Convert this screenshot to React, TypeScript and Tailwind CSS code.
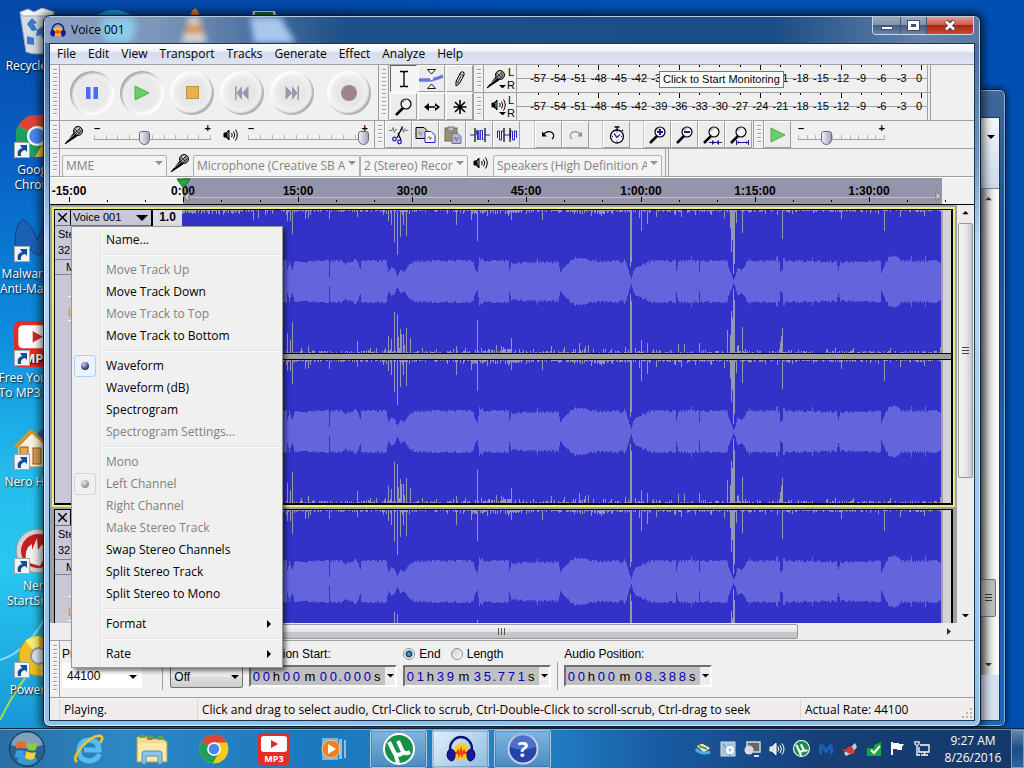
import { useState } from 'react'
import type { ReactNode } from 'react'
import clsx from 'clsx'

const WAVE_W = 759
const WAVE_H = 143
const WAVE_X = 182

// [x, length] of the clipped peaks, measured from the top / bottom edge
const TOP_PEAKS = [
  [219, 5], [253, 10], [258, 8], [287, 11], [290, 11], [292, 24], [305, 9], [308, 8], [329, 9], [357, 7], [388, 11], [391, 15],
  [394, 32], [397, 45], [400, 27], [403, 15], [406, 26], [456, 15], [471, 10], [477, 31], [511, 10], [542, 10],
  [630, 57], [631, 52], [639, 8], [641, 21], [647, 14], [656, 7], [681, 7], [724, 8], [730, 18], [731, 42],
  [732, 30], [733, 64], [734, 54], [736, 13], [742, 23], [782, 29], [841, 9], [884, 21], [900, 7], [924, 6],
]
const BOTTOM_PEAKS = [
  [287, 20], [290, 13], [292, 31], [308, 7], [357, 12], [376, 5], [388, 17], [391, 14], [394, 41], [397, 39], [398, 16],
  [400, 24], [401, 19], [403, 19], [404, 8], [406, 25], [410, 15], [422, 5], [456, 7], [477, 33], [496, 8], [511, 15],
  [551, 7], [564, 6], [579, 10], [585, 7], [588, 8], [625, 6], [630, 59], [631, 52], [641, 13], [647, 10], [678, 9],
  [684, 9], [699, 10], [727, 23], [730, 18], [731, 42], [732, 35], [733, 64], [734, 53], [737, 7], [738, 8], [742, 26],
  [780, 11], [781, 17], [782, 25], [835, 5], [940, 6],
]
// half height of the RMS band along the track
const RMS = [
  [182, 19], [286, 19], [287, 11], [289, 18], [292, 11], [294, 18], [328, 19], [329, 4], [330, 19], [342, 19], [345, 16], [356, 21],
  [358, 16], [360, 12], [361, 19], [386, 19], [388, 9], [391, 14], [394, 12], [397, 5], [400, 11], [404, 9], [407, 14], [413, 18],
  [420, 19], [472, 19], [475, 11], [477, 8], [479, 22], [482, 19], [508, 19], [509, 10], [511, 17], [558, 18], [560, 9], [563, 13], [575, 22],
  [590, 19], [626, 18], [629, 7], [631, 2], [633, 10], [636, 14], [645, 16], [652, 19], [675, 19], [676, 10], [678, 19], [698, 19], [699, 9],
  [700, 19], [726, 19], [729, 12], [732, 4], [733, 1], [735, 5], [737, 13], [741, 11], [748, 19], [779, 19], [780, 9],
  [782, 11], [783, 22], [786, 19], [836, 18], [838, 11], [840, 18], [880, 19], [881, 8], [883, 13], [885, 16], [889, 23], [895, 24], [901, 19], [935, 19], [940, 16],
]

function createRandom(seed: number) {
  let s = seed
  return () => {
    s = (s * 1664525 + 1013904223) % 4294967296
    return s / 4294967296
  }
}

function rmsAt(x: number) {
  const i = RMS.findIndex(([px]) => px >= x)
  if (i <= 0) return RMS[i === 0 ? 0 : RMS.length - 1][1]
  const [x0, y0] = RMS[i - 1]
  const [x1, y1] = RMS[i]
  return y0 + ((y1 - y0) * (x - x0)) / (x1 - x0)
}

function buildWave() {
  const rnd = createRandom(17)
  let peaks = ''
  let rms = ''
  for (let i = 0; i < WAVE_W; i++) {
    const x = i + WAVE_X
    const busy = (x > 470 && x < 530) || (x > 572 && x < 615) || x < 240
    let top = rnd() < (busy ? 0.8 : 0.5) ? 1 + Math.floor(rnd() * (busy ? 4 : 2)) : 0
    if (rnd() < 0.05) top += 3
    let bottom = rnd() < 0.45 ? 1 + Math.floor(rnd() * (busy ? 4 : 2)) : 0
    if (rnd() < 0.05) bottom += 3
    const tp = TOP_PEAKS.find(([px]) => px === x)
    const bp = BOTTOM_PEAKS.find(([px]) => px === x)
    if (tp) top = tp[1]
    if (bp) bottom = bp[1]
    if (top) peaks += `M${i} 0h1v${top}h-1z`
    if (bottom) peaks += `M${i} ${WAVE_H}h1v-${bottom}h-1z`
    const base = rmsAt(x)
    const half = Math.round(base + (base > 15 ? rnd() * 2.5 + (rnd() < 0.02 ? 4 : 0) : 0))
    rms += `M${i} ${71 - half}h1v${half * 2 + 1}h-1z`
  }
  return { peaks, rms }
}

const WAVE = buildWave()

function Waveform() {
  return (
    <svg
      viewBox={`0 0 ${WAVE_W} ${WAVE_H}`}
      preserveAspectRatio="none"
      shapeRendering="crispEdges"
      className="block h-[143px] w-full bg-[#3232c8]"
    >
      <path d={WAVE.rms} fill="#6464dc" />
      <path d={WAVE.peaks} fill="#9696af" />
    </svg>
  )
}

/* ---------- small glyphs ---------- */

function MicIcon() {
  return (
    <svg width="20" height="20" viewBox="0 0 20 20">
      <path d="M1 19 10 8l3 3z" fill="#000" stroke="#000" />
      <path d="M4 15l7-6" stroke="#aaa" />
      <circle cx="14" cy="6" r="4.5" fill="#999" stroke="#000" />
      <path d="M11 4l5 5M13 2l4 5M10 6l4 4M11 8l5-5M13 10l4-4" stroke="#222" strokeWidth="0.7" />
      <path d="M12 4h2M13 3h2" stroke="#eee" />
    </svg>
  )
}

function SpeakerIcon() {
  return (
    <svg width="15" height="14" viewBox="0 0 15 14" fill="none" stroke="#000">
      <path d="M1 5h2L6 2v10L3 9H1z" fill="#000" />
      <path d="M4 5.500l1-1v5" stroke="#aaa" />
      <path d="M8.500 5q1.500 2 0 4M10.500 3.500q2.500 3.500 0 7M12.500 1.500q3.500 5.500 0 11" />
    </svg>
  )
}

function Lens({ children }: { children?: ReactNode }) {
  return (
    <svg width="22" height="22" viewBox="0 0 22 22" fill="none">
      <path d="M3 19l7-7" stroke="#000" strokeWidth="2.500" />
      <circle cx="13" cy="8" r="5" fill="#f4f4f4" stroke="#000" strokeWidth="1.200" />
      <path d="M10 7q1-2.500 3-2.500" stroke="#999" />
      {children}
    </svg>
  )
}

function Arrow({ className, size = 8 }: { className?: string; size?: number }) {
  return (
    <svg width={size} height={size / 2} viewBox="0 0 8 4" className={className}>
      <path d="M0 0h8L4 4z" fill="currentColor" />
    </svg>
  )
}

function Grabber() {
  return (
    <div className="flex w-[10px] shrink-0 justify-center border-r border-[#a0a0a0] py-1">
      <div className="w-[4px] bg-[repeating-linear-gradient(180deg,#a0a0a0_0_1px,#ffffff_1px_2px,#f0f0f0_2px_4px)]" />
    </div>
  )
}

function RoundButton({ label, pressed, children }: { label: string; pressed?: boolean; children: ReactNode }) {
  return (
    <button
      aria-label={label}
      className={clsx(
        'flex size-[44px] shrink-0 items-center justify-center rounded-full',
        pressed
          ? 'bg-[radial-gradient(circle,#e9e9e9_45%,#f0f0f0_65%)] shadow-[inset_2px_2px_2px_#a8a8a8,inset_-2px_-2px_3px_#ffffff]'
          : 'bg-[radial-gradient(circle,#e7e7e7_40%,#f2f2f2_62%)] shadow-[inset_-2px_-2px_2px_#acacac,inset_2px_2px_3px_#ffffff]',
      )}
    >
      {children}
    </button>
  )
}

function ToolButton({ label, active, children }: { label: string; active?: boolean; children: ReactNode }) {
  return (
    <button
      aria-label={label}
      className={clsx(
        'flex h-[27px] w-[27px] shrink-0 items-center justify-center border',
        active
          ? 'border-t-[#606060] border-l-[#606060] border-r-white border-b-white bg-[#f4f4f4]'
          : 'border-t-white border-l-white border-r-[#a0a0a0] border-b-[#a0a0a0] bg-[#ececec]',
      )}
    >
      {children}
    </button>
  )
}

function MixerSlider({ label, value, className }: { label: string; value: number; className: string }) {
  return (
    <div className={clsx('relative h-[27px] shrink-0', className)}>
      <div className="flex justify-between px-px font-['Liberation_Sans',sans-serif] text-[11px] leading-[14px] font-bold">
        <span>–</span>
        <span>+</span>
      </div>
      <div className="mx-px flex h-[5px] justify-between border-b border-[#a0a0a0]">
        {Array.from({ length: 11 }, (_, i) => (
          <i key={i} className="h-full w-px bg-[#b8b8b8]" />
        ))}
      </div>
      <input
        type="range"
        aria-label={label}
        defaultValue={value}
        className="absolute inset-x-0 top-[9px] h-[15px] w-full appearance-none bg-transparent [&::-webkit-slider-thumb]:h-[14px] [&::-webkit-slider-thumb]:w-[11px] [&::-webkit-slider-thumb]:appearance-none [&::-webkit-slider-thumb]:rounded-t-[3px] [&::-webkit-slider-thumb]:rounded-b-[6px] [&::-webkit-slider-thumb]:border [&::-webkit-slider-thumb]:border-[#686874] [&::-webkit-slider-thumb]:bg-[linear-gradient(90deg,#f0f0fa,#a4a4c0)]"
      />
    </div>
  )
}

function DeviceSelect({ label, value, className }: { label: string; value: string; className: string }) {
  return (
    <div className={clsx('relative h-[22px] shrink-0', className)}>
      <select
        aria-label={label}
        className="h-full w-full appearance-none overflow-hidden rounded-[2px] border border-[#adb2b5] bg-[#f4f4f4] pr-[14px] pl-[3px] text-[12px] text-[#838383]"
      >
        <option>{value}</option>
      </select>
      <Arrow className="pointer-events-none absolute top-[9px] right-[4px] text-[#909090]" />
    </div>
  )
}

const DB_MARKS = Array.from({ length: 20 }, (_, i) => 57 - i * 3)

function Meter({ label, tooltip, children }: { label: string; tooltip?: string; children: ReactNode }) {
  return (
    <div className="flex h-[27px]">
      <Grabber />
      <button aria-label={label} className="flex w-[32px] shrink-0 items-center">
        <span className="flex w-[22px] flex-col items-end">{children}</span>
        <span className="flex flex-col pl-px font-['Liberation_Sans',sans-serif] text-[11px] leading-[13px]">
          <span>L</span>
          <span>R</span>
        </span>
      </button>
      <div className="relative w-[411px] border-l border-[#a0a0a0]">
        <div className="absolute inset-x-0 top-[13px] h-px bg-[#a0a0a0]" />
        <div className="relative flex h-full w-[415px] pl-[11px]">
          {DB_MARKS.map((db) => (
            <div key={db} className="flex flex-1 flex-col items-center">
              <i className={clsx('w-px bg-black', db % 12 ? 'h-[2px]' : 'h-[5px]')} />
              <span
                className={clsx(
                  "font-['Liberation_Sans',sans-serif] text-[11px] leading-[16px] whitespace-nowrap",
                  db % 12 ? 'pt-[3px]' : '',
                  db === 0 && 'pr-[6px]',
                )}
              >
                {db ? `-${db}` : '0'}
              </span>
            </div>
          ))}
        </div>
        {tooltip && (
          <div
            role="tooltip"
            className="absolute top-[6px] left-[142px] z-10 border border-[#767676] bg-white px-[3px] font-['Liberation_Sans',sans-serif] text-[11px] leading-[15px] whitespace-nowrap"
          >
            {tooltip}
          </div>
        )}
      </div>
      <div className="w-[4px] border-x border-[#a0a0a0]" />
    </div>
  )
}

/* ---------- toolbars ---------- */

function TransportRow() {
  return (
    <div className="flex h-[56px] border-b border-[#a0a0a0]">
      <Grabber />
      <div className="flex w-[319px] shrink-0 items-center gap-[6px] border-r border-[#a0a0a0] pl-[10px]">
        <RoundButton label="Pause" pressed>
          <svg width="14" height="14" viewBox="0 0 14 14" fill="#4a6cf0">
            <path d="M1 1h4.500v12H1zM8.500 1H13v12H8.500z" />
          </svg>
        </RoundButton>
        <RoundButton label="Play" pressed>
          <svg width="16" height="16" viewBox="0 0 16 16">
            <path d="M1 1l14 7-14 7z" fill="#66cf66" stroke="#58a858" />
          </svg>
        </RoundButton>
        <RoundButton label="Stop">
          <span className="size-[13px] border border-[#c09040] bg-[#eab04a]" />
        </RoundButton>
        <RoundButton label="Skip to Start">
          <svg width="14" height="14" viewBox="0 0 14 14" fill="#9e94ac">
            <path d="M0 0h1.500v14H0zM7 0v14L1.500 7zM13.500 0v14L7 7z" />
          </svg>
        </RoundButton>
        <RoundButton label="Skip to End">
          <svg width="14" height="14" viewBox="0 0 14 14" fill="#9e94ac">
            <path d="M12.500 0H14v14h-1.500zM7 0v14l5.500-7zM.5 0v14L7 7z" />
          </svg>
        </RoundButton>
        <div className="pl-[7px]">
          <RoundButton label="Record">
            <span className="size-[16px] rounded-full bg-[#9c8688]" />
          </RoundButton>
        </div>
      </div>
      <Grabber />
      <div className="grid grid-cols-3 gap-px border-r border-[#a0a0a0] pl-px">
        <ToolButton label="Selection Tool" active>
          <svg width="12" height="18" viewBox="0 0 12 18" stroke="#000" fill="none">
            <path d="M2 1.500h3l1 1 1-1h3M2 16.500h3l1-1 1 1h3M6 2v14" strokeWidth="1.300" />
          </svg>
        </ToolButton>
        <ToolButton label="Envelope Tool">
          <svg width="25" height="22" viewBox="0 0 25 22" fill="none">
            <path d="M0 12h9q6 0 15-4" stroke="#6a76e0" strokeWidth="3.500" />
            <path d="M8.500 1.500h8l-4 4.500zM8.500 20.500h8l-4-4.500z" stroke="#000" strokeWidth="0.900" fill="#fff" />
            <circle cx="12.500" cy="10.500" r="1.500" fill="#fff" />
          </svg>
        </ToolButton>
        <ToolButton label="Draw Tool">
          <svg width="12" height="18" viewBox="0 0 12 18" stroke="#000" fill="#ddd">
            <path d="M2 16v-4.500L6.500 2.500Q8 1 10 2.500v2.500L5.500 13.500z" />
            <path d="M2 11.500l3.500 2M6 4l4 2M7 6l-3 6" strokeWidth="0.800" />
          </svg>
        </ToolButton>
        <ToolButton label="Zoom Tool">
          <Lens />
        </ToolButton>
        <ToolButton label="Time Shift Tool">
          <svg width="18" height="10" viewBox="0 0 18 10">
            <path d="M1 5l5-4v8zM17 5l-5-4v8zM4 4.200h10v1.600H4z" />
          </svg>
        </ToolButton>
        <ToolButton label="Multi-Tool Mode">
          <svg width="14" height="14" viewBox="0 0 14 14" stroke="#000" strokeWidth="1.600">
            <path d="M7 0v14M2 2l10 10M12 2L2 12M0.500 7h13" />
          </svg>
        </ToolButton>
      </div>
      <div className="flex flex-col gap-px bg-[linear-gradient(180deg,transparent_27px,#a0a0a0_27px_28px,transparent_28px)]">
        <Meter label="Recording meter" tooltip="Click to Start Monitoring">
          <MicIcon />
          <Arrow size={7} className="-mt-1" />
        </Meter>
        <Meter label="Playback meter">
          <SpeakerIcon />
          <Arrow size={7} />
        </Meter>
      </div>
    </div>
  )
}

function EditRow() {
  return (
    <div className="flex h-[28px] border-b border-[#a0a0a0]">
      <Grabber />
      <div className="flex w-[315px] shrink-0 items-center border-r border-[#a0a0a0] pl-[4px]">
        <MicIcon />
        <MixerSlider label="Recording volume" value={43} className="ml-[9px] w-[119px]" />
        <div className="ml-[11px]">
          <SpeakerIcon />
        </div>
        <MixerSlider label="Playback volume" value={100} className="ml-[9px] w-[122px]" />
      </div>
      <Grabber />
      <div className="flex">
        <ToolButton label="Cut">
          <svg width="20" height="20" viewBox="0 0 20 20" fill="none">
            <path d="M0 5.500h3l1-3 1.500 5 1-3h1.500M12 5.500l1-3 1.500 5 1-4 1 2h3" stroke="#777" />
            <path d="M13.500 1.500L8 13M9 8l3 7" stroke="#000" strokeWidth="1.200" />
            <circle cx="5.500" cy="14" r="1.800" stroke="#2020c8" strokeWidth="1.300" />
            <circle cx="10.500" cy="17" r="1.800" stroke="#2020c8" strokeWidth="1.300" />
          </svg>
        </ToolButton>
        <ToolButton label="Copy">
          <svg width="21" height="18" viewBox="0 0 21 18">
            <path d="M1 1.500h8l3 3v8H1z" fill="#ccc" stroke="#000" />
            <path d="M10 5.500h6l4 4v7H10z" fill="#fff" stroke="#2020c8" />
            <path d="M3 7l1.500-1.500 1 4 1.500-3M12 12h1l1-2 1 4 1-3 1 2" stroke="#777" strokeWidth="0.800" fill="none" />
          </svg>
        </ToolButton>
        <ToolButton label="Paste">
          <svg width="18" height="18" viewBox="0 0 18 18">
            <rect x="1" y="2" width="12" height="13" fill="#98946c" stroke="#66665a" />
            <path d="M4 1h6v4H4z" fill="#bbb" stroke="#777" />
            <path d="M8 7.500h6l3 3v7H8z" fill="#b4b8cc" stroke="#6a6ea8" />
            <path d="M9.500 13h1l1-2 1 4 1-3h2" stroke="#667" strokeWidth="0.800" fill="none" />
          </svg>
        </ToolButton>
        <ToolButton label="Trim">
          <svg width="20" height="16" viewBox="0 0 20 16" fill="none" stroke="#2424c8">
            <path d="M0 8h5M15 8h5M7.500 3v10M10 3v10M12.500 3v10" />
            <path d="M6.500 8V3.500h2V12.500h2V3.500h2V12.500h1" strokeWidth="0.800" />
            <path d="M5 1v14M15 1v14" stroke="#000" strokeWidth="1.200" />
          </svg>
        </ToolButton>
        <ToolButton label="Silence">
          <svg width="20" height="16" viewBox="0 0 20 16" fill="none" stroke="#2424c8">
            <path d="M0.500 11V4h2v9h2V4h2M13.500 11V4h2v9h2V4h2v7M7 8h6" />
            <path d="M7 1v14M13 1v14" stroke="#000" strokeWidth="1.200" />
          </svg>
        </ToolButton>
        <div className="ml-[14px] flex border-l border-[#c8c8c8]">
          <ToolButton label="Undo">
            <svg width="15" height="10" viewBox="0 0 15 10" fill="none" stroke="#000" strokeWidth="1.200">
              <path d="M2 5q4-5 9-2.500 3.500 3 0 6.500" />
              <path d="M1 1.500v5h5z" fill="#000" stroke="none" />
            </svg>
          </ToolButton>
          <ToolButton label="Redo">
            <svg width="15" height="10" viewBox="0 0 15 10" fill="none" stroke="#909090" strokeWidth="1.200">
              <path d="M13 5q-4-5-9-2.500-3.500 3 0 6.500" />
              <path d="M14 1.500v5H9z" fill="#909090" stroke="none" />
            </svg>
          </ToolButton>
        </div>
        <div className="ml-[13px] flex border-l border-[#c8c8c8]">
          <ToolButton label="Sync-Lock Tracks">
            <svg width="16" height="18" viewBox="0 0 16 18" fill="none" stroke="#000" strokeWidth="1.300">
              <circle cx="8" cy="10.500" r="6.500" fill="#fff" />
              <path d="M8 1v3M5.500 1h5M13 4l1 1" />
              <path d="M8 11.500L5 7.500M8 11.500l3-3" stroke="#2424a8" />
              <path d="M8 5.500v1M8 14.500v1M3 10.500h1M12 10.500h1" stroke="#2424a8" />
            </svg>
          </ToolButton>
        </div>
        <div className="ml-[13px] flex border-l border-[#c8c8c8]">
          <ToolButton label="Zoom In">
            <Lens>
              <path d="M10 8h6M13 5v6" stroke="#1a1aa0" strokeWidth="2" />
            </Lens>
          </ToolButton>
          <ToolButton label="Zoom Out">
            <Lens>
              <path d="M10 8h6" stroke="#1a1aa0" strokeWidth="2" />
            </Lens>
          </ToolButton>
          <ToolButton label="Fit Selection">
            <Lens>
              <path d="M8 18.500h13" stroke="#1a1aa0" />
              <path d="M11 16v5l3-2.500zM18 16v5l-3-2.500z" fill="#1a1aa0" />
            </Lens>
          </ToolButton>
          <ToolButton label="Fit Project">
            <Lens>
              <path d="M8.500 16v5M20.500 16v5M9 18.500h11" stroke="#1a1aa0" />
              <path d="M9 18.500l2-1.500v3zM20 18.500l-2-1.500v3z" fill="#1a1aa0" />
            </Lens>
          </ToolButton>
        </div>
      </div>
      <div className="ml-px flex border-l border-[#a0a0a0]">
        <Grabber />
        <ToolButton label="Play at Speed">
          <svg width="16" height="16" viewBox="0 0 16 16">
            <path d="M1 1l14 7-14 7z" fill="#66cf66" stroke="#58a858" />
          </svg>
        </ToolButton>
        <MixerSlider label="Playback speed" value={31} className="ml-[6px] w-[89px]" />
      </div>
    </div>
  )
}

function DeviceRow() {
  return (
    <div className="flex h-[28px] border-b border-[#a0a0a0]">
      <Grabber />
      <div className="flex items-center border-r border-[#a0a0a0] pr-[3px] pl-[2px]">
        <DeviceSelect label="Audio Host" value="MME" className="w-[105px]" />
        <div className="mx-[3px]">
          <MicIcon />
        </div>
        <DeviceSelect label="Recording Device" value="Microphone (Creative SB Audigy)" className="w-[167px]" />
        <DeviceSelect label="Recording Channels" value="2 (Stereo) Recording Channels" className="w-[108px]" />
        <div className="mx-[5px]">
          <SpeakerIcon />
        </div>
        <DeviceSelect label="Playback Device" value="Speakers (High Definition Audio)" className="w-[169px]" />
      </div>
      <div className="ml-[2px] border-l border-[#a0a0a0]" />
    </div>
  )
}

const HOURS = ['-15:00', '0:00', '15:00', '30:00', '45:00', '1:00:00', '1:15:00', '1:30:00']

function Ruler() {
  return (
    <div className="relative h-[28px] shrink-0 overflow-hidden border-t border-b border-t-white border-b-black bg-[#f0f0f0]">
      <div className="absolute inset-y-0 right-[32px] left-[133px] bg-[#9494aa]">
        <div className="absolute inset-x-0 bottom-[6px] h-px bg-[#c0c0c8]" />
      </div>
      {Array.from({ length: 24 }, (_, i) => (
        <i
          key={i}
          className={clsx('absolute bottom-[2px] w-px bg-black', i % 3 ? 'h-[2px]' : 'h-[5px]')}
          style={{ left: Math.round(19 + i * 38.1) }}
        />
      ))}
      {HOURS.map((text, i) => (
        <span
          key={text}
          className="absolute top-[6px] -translate-x-1/2 font-['Liberation_Sans',sans-serif] text-[12px] leading-[14px] font-bold"
          style={{ left: Math.round(19 + i * 114.3) }}
        >
          {text}
        </span>
      ))}
      <svg className="absolute top-0 left-[127px]" width="14" height="26" viewBox="0 0 14 26">
        <path d="M0 1h13L6.500 10z" fill="#24a83c" stroke="#106820" />
        <path d="M12 14v10l-5-5z" fill="#c8c8c8" stroke="#777" />
      </svg>
      <svg className="absolute right-[32px] bottom-[2px]" width="7" height="12" viewBox="0 0 7 12">
        <path d="M1 1v10l5-5z" fill="#c8c8c8" stroke="#777" />
      </svg>
    </div>
  )
}

function Track({ name, selected, onMenu }: { name: string; selected?: boolean; onMenu: () => void }) {
  return (
    <article className={clsx('mx-[2px] border-2', selected ? 'border-[#ecec78]' : 'border-[#a0a0a0]')}>
      <div className="flex border border-r-2 border-b-2 border-black">
        <section className="w-[96px] shrink-0 bg-[#c8c8d8] font-['Liberation_Sans',sans-serif] text-[11px] leading-[16px]">
          <div className="flex h-[16px] border-b border-[#707078]">
            <button aria-label="Close track" className="flex w-[16px] items-center justify-center border-r border-black">
              <svg width="9" height="9" viewBox="0 0 9 9" stroke="#000" strokeWidth="1.500">
                <path d="M0 0l9 9M9 0L0 9" />
              </svg>
            </button>
            <button onClick={onMenu} className="flex flex-1 items-center justify-between pr-[3px] pl-[2px] leading-[15px]">
              {name}
              <Arrow size={12} />
            </button>
          </div>
          <p className="pl-[3px]">Stereo</p>
          <p className="pl-[3px]">32-bit</p>
          <button className="mt-px h-[16px] w-full border-y border-[#808088] pl-[11px] text-left leading-[14px]">Mute</button>
          <div className="px-[13px] pt-[6px]">
            <input type="range" aria-label="Gain" className="block h-[16px] w-full appearance-none border-b border-white" />
            <div className="pt-[7px] text-[#e08a20]">L</div>
            <div className="h-px bg-white" />
          </div>
        </section>
        <div className="flex w-[31px] shrink-0 flex-col border-l-2 border-black bg-[#dcdce6] pt-px text-center font-['Liberation_Sans',sans-serif] text-[12px] leading-[13px] font-bold">
          1.0
        </div>
        <div className="min-w-0 flex-1">
          <div className="flex">
            <div className="min-w-0 flex-1">
              <Waveform />
            </div>
            <div className="w-[10px] border-l-2 border-[#a0a0a0] bg-[#d4d4d4]" />
          </div>
          <div className="h-[7px] border-y border-black bg-[#a0a0a0]" />
          <div className="flex">
            <div className="min-w-0 flex-1">
              <Waveform />
            </div>
            <div className="w-[10px] border-l-2 border-[#a0a0a0] bg-[#d4d4d4]" />
          </div>
        </div>
      </div>
    </article>
  )
}

const MENU_GROUPS = [
  [{ text: 'Name...' }],
  [
    { text: 'Move Track Up', disabled: true },
    { text: 'Move Track Down' },
    { text: 'Move Track to Top', disabled: true },
    { text: 'Move Track to Bottom' },
  ],
  [
    { text: 'Waveform', checked: true },
    { text: 'Waveform (dB)' },
    { text: 'Spectrogram' },
    { text: 'Spectrogram Settings...', disabled: true },
  ],
  [
    { text: 'Mono', disabled: true },
    { text: 'Left Channel', disabled: true, checked: true },
    { text: 'Right Channel', disabled: true },
    { text: 'Make Stereo Track', disabled: true },
    { text: 'Swap Stereo Channels' },
    { text: 'Split Stereo Track' },
    { text: 'Split Stereo to Mono' },
  ],
  [{ text: 'Format', submenu: true }],
  [{ text: 'Rate', submenu: true }],
] as { text: string; disabled?: boolean; checked?: boolean; submenu?: boolean }[][]

function TrackMenu() {
  return (
    <div
      role="menu"
      className="absolute top-[182px] left-[21px] z-20 w-[212px] border border-[#979797] bg-[#f0f0f0] bg-[linear-gradient(90deg,transparent_28px,#e2e3e3_28px_29px,#ffffff_29px_30px,transparent_30px)] py-[2px] shadow-[3px_3px_4px_rgba(0,0,0,0.5)]"
    >
      {MENU_GROUPS.map((group, g) => (
        <div key={group[0].text}>
          {g > 0 && (
            <div className="ml-[29px] flex h-[8px] items-center pr-[2px]">
              <div className="h-[2px] w-full border-t border-b border-t-[#e0e0e0] border-b-white" />
            </div>
          )}
          {group.map((item) => (
            <button
              key={item.text}
              role="menuitem"
              disabled={item.disabled}
              className={clsx(
                'flex h-[22px] w-full items-center text-left text-[12px]',
                item.disabled ? 'text-[#808080]' : 'text-black',
              )}
            >
              <span className="flex w-[34px] shrink-0 pl-[2px]">
                {item.checked && (
                  <span
                    className={clsx(
                      'flex size-[22px] items-center justify-center rounded-[3px] border',
                      item.disabled ? 'border-[#d4d4d4] bg-[#f0f0f0]' : 'border-[#aecff7] bg-[#eaf2fb]',
                    )}
                  >
                    <i
                      className={clsx(
                        'size-[8px] rounded-full',
                        item.disabled
                          ? 'bg-[radial-gradient(circle_at_35%_30%,#e8e8e8,#909090_70%)]'
                          : 'bg-[radial-gradient(circle_at_35%_30%,#c8c8f0,#2c2c70_70%)]',
                      )}
                    />
                  </span>
                )}
              </span>
              {item.text}
              {item.submenu && (
                <svg width="4" height="8" viewBox="0 0 4 8" className="mr-[11px] ml-auto">
                  <path d="M0 0l4 4-4 4z" />
                </svg>
              )}
            </button>
          ))}
        </div>
      ))}
    </div>
  )
}

function TimeField({ label, value }: { label: string; value: string }) {
  return (
    <div
      role="group"
      aria-label={label}
      className="flex h-[22px] w-[148px] border-2 border-t-[#707070] border-r-white border-b-white border-l-[#707070] bg-[#c0c0c0] font-['Liberation_Sans',sans-serif] text-[13px] leading-[19px]"
    >
      <div className="flex flex-1">
        {value.split('').map((ch, i) => (
          <span
            key={i}
            className={clsx(
              'text-center',
              ch === 'm' ? 'w-[17px]' : ch === '.' ? 'w-[4px]' : 'w-[10px]',
              /[\d.]/.test(ch) && 'text-[#0000b4]',
            )}
          >
            {ch}
          </span>
        ))}
      </div>
      <button aria-label={`${label} format`} className="flex w-[10px] items-center justify-center bg-[#ececec]">
        <Arrow size={7} />
      </button>
    </div>
  )
}

function SelectionBar() {
  return (
    <div className="flex h-[57px] shrink-0 border-t border-[#a0a0a0] bg-[#f0f0f0] font-['Liberation_Sans',sans-serif] text-[12px]">
      <Grabber />
      <div className="flex flex-col pt-[4px] pl-[2px]">
        <label htmlFor="rate" className="h-[18px] leading-[18px] whitespace-nowrap">Project Rate (Hz):</label>
        <div className="relative w-[80px]">
          <select id="rate" className="h-[25px] w-full appearance-none bg-white pl-[5px]">
            <option>44100</option>
          </select>
          <Arrow className="pointer-events-none absolute top-[12px] right-[5px]" />
        </div>
      </div>
      <div className="mt-[21px] mb-[7px] ml-[5px] border-l border-[#a0a0a0]" />
      <div className="flex flex-col gap-[3px] pt-[4px] pl-[7px]">
        <label htmlFor="snap" className="h-[18px] leading-[18px]">Snap To:</label>
        <div className="relative w-[73px]">
          <select id="snap" className="h-[22px] w-full appearance-none rounded-[2px] border border-[#707070] bg-[linear-gradient(180deg,#f2f2f2,#ebebeb_50%,#dddddd_50%,#cfcfcf)] pl-[3px]">
            <option>Off</option>
          </select>
          <Arrow className="pointer-events-none absolute top-[9px] right-[4px]" />
        </div>
      </div>
      <div className="flex flex-col gap-[2px] pt-[4px] pl-[6px]">
        <span className="h-[18px] leading-[18px]">Selection Start:</span>
        <TimeField label="Selection Start" value="00h00m00.000s" />
      </div>
      <div className="flex flex-col gap-[2px] pt-[4px] pl-[6px]">
        <div className="flex h-[18px] items-center gap-[4px]">
          <input
            id="end"
            type="radio"
            name="range"
            defaultChecked
            className="size-[12px] appearance-none rounded-full border border-[#8e8f8f] bg-[#f4f4f4] checked:bg-[radial-gradient(circle,#3aa0d8_0_1px,#14405c_3px,#f4f4f4_4px)]"
          />
          <label htmlFor="end">End</label>
          <input
            id="length"
            type="radio"
            name="range"
            className="ml-[6px] size-[12px] appearance-none rounded-full border border-[#8e8f8f] bg-[linear-gradient(135deg,#c8ccd0,#ffffff)] checked:bg-[radial-gradient(circle,#3aa0d8_0_1px,#14405c_3px,#f4f4f4_4px)]"
          />
          <label htmlFor="length">Length</label>
        </div>
        <TimeField label="Selection End" value="01h39m35.771s" />
      </div>
      <div className="mt-[21px] mb-[7px] ml-[6px] border-l border-[#a0a0a0]" />
      <div className="flex flex-col gap-[2px] pt-[4px] pl-[6px]">
        <span className="h-[18px] leading-[18px]">Audio Position:</span>
        <TimeField label="Audio Position" value="00h00m08.388s" />
      </div>
    </div>
  )
}

const MENUS = ['File', 'Edit', 'View', 'Transport', 'Tracks', 'Generate', 'Effect', 'Analyze', 'Help']

function AudacityLogo({ size }: { size: number }) {
  return (
    <svg width={size} height={size} viewBox="0 0 30 30">
      <path d="M8 24v-9l2-4 1 1 2-3 1 2 1-3 2 3 1-2 2 3 1-1 1 4v9l-2 2H10z" fill="#fcc81c" />
      <path d="M8 19h3l1-2 1 4 2-5 1 5 2-4 1 2h4" stroke="#f04010" strokeWidth="2" fill="none" />
      <path d="M4 18v-3a11 12 0 0 1 22 0v3" fill="none" stroke="#10107c" strokeWidth="2.400" />
      <path d="M4 15q5 0 5 6t-4 6q-4-2-4-6t3-6zM26 15q-5 0-5 6t4 6q4-2 4-6t-3-6z" fill="#1818a0" stroke="#08084c" />
    </svg>
  )
}

function AudacityWindow() {
  const [menuOpen, setMenuOpen] = useState(true)

  return (
    <main className="absolute top-[15px] right-[43px] bottom-px left-[43px] flex flex-col rounded-[7px] border border-[#0c1c30] bg-[linear-gradient(180deg,#3c6a9c_0%,#6c94c0_20%,#b4d6f8_32%,#8cc0e8_100%)] px-[5px] pb-[5px] shadow-[0_0_9px_3px_rgba(0,0,0,0.6),inset_0_0_0_1px_rgba(255,255,255,0.65)]">
      <header className="relative -mx-[4px] mt-px flex h-[26px] shrink-0 items-center gap-[5px] overflow-hidden rounded-t-[6px] bg-[linear-gradient(90deg,#8ba0c2_0%,#7c96ba_12%,#1f5088_32%,#1b4c84_78%,#6482aa_94%,#587aa6_100%)] pl-[5px]">
        <svg className="absolute inset-y-0 left-[35px] h-full blur-[3px]" width="220" height="26" viewBox="0 0 220 26">
          <circle cx="38" cy="11" r="18" fill="#8cc8e8" />
          <path d="M109 0h10l8 26h-26z" fill="#d8d8d8" />
          <path d="M107 8h14l3 8h-20z" fill="#d88c50" />
          <path d="M170 0h30l16 26h-42z" fill="#a8c8ee" />
        </svg>
        <div className="relative">
          <AudacityLogo size={16} />
        </div>
        <h1 className="relative text-[12px] leading-[16px] text-black">Voice 001</h1>
        <div className="absolute top-0 right-[5px] flex h-[18px] overflow-hidden rounded-b-[4px] border border-t-0 border-[#c8d8e8]">
          <button aria-label="Minimize" className="flex w-[28px] items-end justify-center border-r border-[#405878] bg-[linear-gradient(180deg,#98a8bc,#8494ac_45%,#425c80_50%,#6884a8)] pb-[4px]">
            <i className="h-[4px] w-[12px] border border-[#40506c] bg-white" />
          </button>
          <button aria-label="Maximize" className="flex w-[26px] items-center justify-center border-r border-[#405878] bg-[linear-gradient(180deg,#98a8bc,#8494ac_45%,#425c80_50%,#6884a8)]">
            <i className="h-[9px] w-[11px] border-[3px] border-white bg-[#40506c] outline outline-[#40506c]" />
          </button>
          <button aria-label="Close" className="flex w-[46px] items-center justify-center bg-[linear-gradient(180deg,#dc9c90,#c86050_45%,#a82814_50%,#c84c34)]">
            <svg width="12" height="11" viewBox="0 0 12 11">
              <path d="M2 1l8 9M10 1L2 10" stroke="#503030" strokeWidth="4.500" />
              <path d="M2 1.500l8 8M10 1.500l-8 8" stroke="#fff" strokeWidth="2.800" />
            </svg>
          </button>
        </div>
      </header>

      <div className="relative flex min-h-0 flex-1 flex-col border border-[#1c3450] bg-[#f0f0f0]">
        <nav className="flex h-[20px] shrink-0 items-center bg-[linear-gradient(180deg,#ffffff,#f0f3fa_35%,#d6dcec_45%,#dfe5f4)] pl-px text-[12px]">
          {MENUS.map((name) => (
            <button key={name} className="px-[6px] leading-[20px]">
              {name}
            </button>
          ))}
        </nav>

        <div className="shrink-0 overflow-hidden border-t border-[#a0a0a0]">
          <TransportRow />
          <EditRow />
          <DeviceRow />
        </div>

        <Ruler />

        <div className="flex min-h-0 flex-1">
          <div className="min-w-0 flex-1 overflow-hidden bg-[#a0a0a0] pt-[2px]">
            <Track name="Voice 001" selected onMenu={() => setMenuOpen(!menuOpen)} />
            <Track name="Voice 001" onMenu={() => setMenuOpen(!menuOpen)} />
          </div>
          <div className="flex w-[17px] shrink-0 flex-col items-center bg-[#ededed] py-[6px]">
            <Arrow className="shrink-0 rotate-180" size={7} />
            <div className="mt-[8px] flex h-[255px] w-[15px] flex-col items-center justify-center gap-[2px] rounded-[2px] border border-[#989898] bg-[linear-gradient(90deg,#f4f4f4,#e8e8ec_50%,#c4c4cc)]">
              <i className="h-px w-[7px] bg-[#444]" />
              <i className="h-px w-[7px] bg-[#444]" />
              <i className="h-px w-[7px] bg-[#444]" />
            </div>
            <Arrow className="mt-auto shrink-0" size={7} />
          </div>
        </div>

        <div className="flex h-[17px] shrink-0 items-center bg-[#ededed] pr-[23px] pl-[155px]">
          <div className="flex h-[15px] w-[593px] items-center justify-center gap-[2px] rounded-[2px] border border-[#989898] bg-[linear-gradient(180deg,#f4f4f4,#e4e4e6_50%,#c8c8cc_55%,#c4c4c8)]">
            <i className="h-[7px] w-px bg-[#555]" />
            <i className="h-[7px] w-px bg-[#555]" />
            <i className="h-[7px] w-px bg-[#555]" />
          </div>
          <svg width="4" height="7" viewBox="0 0 4 7" className="ml-auto">
            <path d="M0 0l4 3.500L0 7z" fill="#333" />
          </svg>
        </div>

        <SelectionBar />

        <footer className="flex h-[23px] shrink-0 items-center border-t border-[#a0a0a0] bg-[#f0edec] pt-[2px] text-[12px] whitespace-nowrap">
          <span className="ml-[9px] w-[138px] border-l border-[#d8d8d8] pl-[4px] leading-[20px]">Playing.</span>
          <span className="min-w-0 flex-1 border-l border-[#d8d8d8] pl-[4px] leading-[20px]">
            Click and drag to select audio, Ctrl-Click to scrub, Ctrl-Double-Click to scroll-scrub, Ctrl-drag to seek
          </span>
          <span className="w-[161px] border-l border-[#d8d8d8] pl-[4px] leading-[20px]">Actual Rate: 44100</span>
          <svg width="13" height="13" viewBox="0 0 13 13" fill="#b8b8b8" className="self-end">
            <path d="M9 1h2v2H9zM9 5h2v2H9zM5 5h2v2H5zM9 9h2v2H9zM5 9h2v2H5zM1 9h2v2H1z" />
          </svg>
        </footer>

        {menuOpen && <TrackMenu />}
      </div>
    </main>
  )
}

function BackWindow() {
  return (
    <div className="absolute top-[89px] right-[18px] bottom-px left-[500px] flex flex-col rounded-[6px] border border-[#0c1c30] bg-[linear-gradient(180deg,#40699c,#1c5498_20%,#1868bc)] pt-[27px] pr-[5px] pb-[5px] shadow-[0_0_6px_1px_rgba(0,0,0,0.5),inset_0_0_0_1px_rgba(200,225,255,0.6)]">
      <div className="flex flex-1 flex-col border border-[#203a58]">
        <div className="flex h-[71px] items-start justify-end border-b border-[#808080] bg-[linear-gradient(180deg,#f4f7fc,#ccd8ea)] pt-[17px] pr-[4px]">
          <Arrow size={8} />
        </div>
        <div className="flex flex-1 flex-col items-end bg-[linear-gradient(270deg,#fafafa_0_3px,#d8d8d8_10px,#808080_20px)] pt-[8px] pr-[7px]">
          <Arrow className="rotate-180 text-[#333]" size={7} />
          <div className="mt-auto -mr-[4px] flex h-[38px] w-[16px] flex-col items-center justify-center gap-[2px] rounded-[2px] border border-[#707070] bg-[#bcbcbc]">
            <i className="h-px w-[7px] bg-[#333]" />
            <i className="h-px w-[7px] bg-[#333]" />
            <i className="h-px w-[7px] bg-[#333]" />
          </div>
          <Arrow className="mt-[46px] mb-[9px] text-[#333]" size={7} />
        </div>
        <div className="h-[45px] bg-[#d4e0f0]" />
      </div>
    </div>
  )
}

/* ---------- desktop ---------- */

function ChromeLogo({ size }: { size: number }) {
  return (
    <svg width={size} height={size} viewBox="0 0 48 48">
      <circle cx="24" cy="24" r="23" fill="#f8c820" />
      <path d="M24 24L4 12.500A23 23 0 0 1 44.500 13.500H24z" fill="#dc4437" />
      <path d="M24 24L4 12.500A23 23 0 0 0 22 47l10-18z" fill="#1ea05c" />
      <circle cx="24" cy="24" r="11" fill="#fff" />
      <circle cx="24" cy="24" r="8.500" fill="#4a88ee" />
    </svg>
  )
}

function Mp3Logo({ size }: { size: number }) {
  return (
    <svg width={size} height={size} viewBox="0 0 32 32">
      <rect width="32" height="32" rx="4" fill="#e42c28" />
      <rect x="3" y="3" width="26" height="16" rx="3" fill="#fff" />
      <path d="M13 7l7 4-7 4z" fill="#d82828" />
      <text x="16" y="29" textAnchor="middle" fontFamily="Open Sans, sans-serif" fontSize="9" fontWeight="700" fill="#fff">MP3</text>
    </svg>
  )
}

function Shortcut() {
  return (
    <svg className="absolute bottom-[2px] left-0" width="16" height="16" viewBox="0 0 16 16">
      <rect x="0.500" y="0.500" width="15" height="15" fill="#f0f4f8" stroke="#a0a8b0" />
      <path d="M4 14q-2-6 4-8L6 3h7v7l-2-2q-5 1-4 6z" fill="#184c94" />
    </svg>
  )
}

const DESKTOP_ICONS = [
  {
    label: ['Recycle Bin'],
    art: (
      <svg width="44" height="48" viewBox="0 0 44 48">
        <path d="M5 4h34l-5 40q-12 4-23 0z" fill="#d4dce4" stroke="#98a4b0" />
        <path d="M5 4l8-3 6 3 8-4 12 4-2 4H7z" fill="#f4f6f8" stroke="#a0a8b0" />
        <path d="M12 16l5-6 5 5-3 1 3 6-5 1zM28 18l5 7-5 6-2-4-5 1 1-6zM12 28l7 2v7l-7-1z" fill="#3c78cc" />
      </svg>
    ),
  },
  { label: ['Google', 'Chrome'], shortcut: true, art: <ChromeLogo size={44} /> },
  {
    label: ['Malwareby…', 'Anti-Malware'],
    shortcut: true,
    art: (
      <svg width="48" height="46" viewBox="0 0 48 46">
        <path d="M4 38Q-4 14 9 1q10 6 15 22Q30 8 39 2q10 14 5 34l-8 6V20l-8 18q-6 2-10-4-4-6-8-4v10z" fill="#1c60b4" stroke="#103c84" />
      </svg>
    ),
  },
  { label: ['Free YouTube', 'To MP3 Con...'], shortcut: true, art: <Mp3Logo size={46} /> },
  {
    label: ['Nero Home'],
    shortcut: true,
    art: (
      <svg width="46" height="46" viewBox="0 0 46 46">
        <circle cx="34" cy="16" r="13" fill="#3c5ca8" />
        <path d="M4 22L18 8l14 12v22H4z" fill="#f8f0dc" stroke="#b09060" />
        <path d="M1 22L17 6l17 15" fill="none" stroke="#d89820" strokeWidth="3" />
        <rect x="6" y="22" width="8" height="9" fill="#e0a850" stroke="#8c5c20" />
        <rect x="19" y="23" width="8" height="16" fill="#d8a050" stroke="#8c5c20" />
      </svg>
    ),
  },
  {
    label: ['Nero', 'StartSmart'],
    shortcut: true,
    art: (
      <svg width="46" height="48" viewBox="0 0 46 48">
        <circle cx="24" cy="23" r="22" fill="#d4d4d8" stroke="#909098" />
        <circle cx="24" cy="23" r="17" fill="#c82020" />
        <path d="M12 34q-2-14 6-18l0 6 5-12 1 12 4-6q6 10-2 22z" fill="#f4f0f0" />
      </svg>
    ),
  },
  {
    label: ['PowerISO'],
    shortcut: true,
    art: (
      <svg width="44" height="46" viewBox="0 0 44 46">
        <circle cx="24" cy="23" r="20" fill="#f0c020" stroke="#b08c10" />
        <path d="M24 23L10 8q6-5 14-5zM24 23l16 12q-6 7-14 8z" fill="#fce878" />
        <circle cx="24" cy="23" r="8" fill="#e0e8f0" stroke="#909898" strokeWidth="2" />
      </svg>
    ),
  },
]

const TASKBAR_BUTTON =
  'flex h-[38px] w-[57px] items-center justify-center rounded-[2px] border border-[#a8c8e4] shadow-[inset_0_0_0_1px_rgba(20,60,110,0.25)]'

function Taskbar() {
  return (
    <nav className="flex h-[40px] shrink-0 items-center border-t border-[#10283c] bg-[linear-gradient(90deg,#2a6ea4_0%,#2c88c4_12%,#1c78bc_30%,#2484c8_52%,#185ca4_64%,#173f78_80%,#143868_100%)] shadow-[inset_0_1px_0_rgba(190,220,245,0.5)]">
      <button aria-label="Start" className="ml-[8px] shrink-0">
        <svg width="38" height="38" viewBox="0 0 38 38">
          <circle cx="19" cy="19" r="17.500" fill="#2a628e" stroke="#123450" />
          <path d="M3 15a16.500 16.500 0 0 1 32 0q-16 6-32 0z" fill="#a4bccc" opacity="0.700" />
          <ellipse cx="19" cy="30" rx="10" ry="5" fill="#38b4e4" opacity="0.700" />
          <path d="M9 12q5-2 9 0l-1 7q-4-2-9 0z" fill="#f06830" />
          <path d="M20 12q4 3 9 1l-1 7q-5 2-9-1z" fill="#90c840" />
          <path d="M8 21q4-2 9 0l-1 7q-4-2-9 0z" fill="#3c9ce4" />
          <path d="M18 21q5 3 10 1l-2 7q-5 2-9-1z" fill="#fcd030" />
        </svg>
      </button>
      <div className="ml-[27px] flex w-[275px] shrink-0 items-center justify-between">
        <button aria-label="Internet Explorer">
          <svg width="32" height="32" viewBox="0 0 32 32" fill="none">
            <path d="M26.500 21q-3 7-10.500 7-10-1-10-10.500Q7 7 16.500 7 26 8 26 17H11" stroke="#58bcec" strokeWidth="5" />
            <path d="M4 29q-5-3 4-14Q20 1 28 3q3 2-1 7" stroke="#f4c430" strokeWidth="2.500" />
          </svg>
        </button>
        <button aria-label="Windows Explorer">
          <svg width="34" height="32" viewBox="0 0 34 32">
            <path d="M2 4h10l2 2h14l4 3v20H2z" fill="#f0dc90" stroke="#b89c50" />
            <path d="M5 2h5v3H5zM12 3h6v3h-6zM23 3h5v4h-5z" fill="#58a848" />
            <path d="M12 5h5v2h-5z" fill="#d86040" />
            <path d="M3 10h28v18H3z" fill="#fae8a8" />
            <path d="M7 31V21q0-3 3-3h14q3 0 3 3v10h-4v-8H11v8z" fill="#88c4e8" stroke="#5090b8" />
          </svg>
        </button>
        <button aria-label="Google Chrome">
          <ChromeLogo size={30} />
        </button>
        <button aria-label="Free YouTube To MP3">
          <Mp3Logo size={32} />
        </button>
        <button aria-label="Windows Media Player">
          <svg width="28" height="26" viewBox="0 0 28 26">
            <path d="M2 2h16v22H2z" fill="#7cb4dc" />
            <path d="M19 3h3v20h-3zM24 4h2v18h-2z" fill="#8cc0e4" />
            <circle cx="11" cy="13" r="9" fill="#f08020" stroke="#fcc890" />
            <path d="M8 8l8 5-8 5z" fill="#fff" />
          </svg>
        </button>
      </div>
      <div className="ml-[22px] flex shrink-0 gap-[5px]">
        <button aria-label="uTorrent" className={clsx(TASKBAR_BUTTON, 'bg-[linear-gradient(180deg,#80b4dc,#4c8cc0)]')}>
          <UTorrent size={32} />
        </button>
        <button aria-label="Audacity" className={clsx(TASKBAR_BUTTON, 'bg-[linear-gradient(135deg,#e4f0f8,#8cbce0)]')}>
          <AudacityLogo size={30} />
        </button>
        <button aria-label="Help" className={clsx(TASKBAR_BUTTON, 'bg-[linear-gradient(180deg,#80b4dc,#4c8cc0)]')}>
          <svg width="32" height="32" viewBox="0 0 32 32">
            <circle cx="16" cy="16" r="14.500" fill="#2444a8" stroke="#c8d4ec" strokeWidth="2" />
            <path d="M3 14a13 13 0 0 1 26 0q-13 5-26 0z" fill="#6c8cdc" opacity="0.600" />
            <text x="16" y="24" textAnchor="middle" fontFamily="Open Sans, sans-serif" fontSize="22" fontWeight="700" fill="#fff">?</text>
          </svg>
        </button>
      </div>
      <div className="ml-auto flex shrink-0 items-center gap-[8px] pr-[3px]">
        <svg width="17" height="16" viewBox="0 0 17 16">
          <path d="M1 5l6-3 9 5-7 5z" fill="#e8e8e8" stroke="#444" />
          <path d="M1 8q5 6 14 3" stroke="#48b0e0" strokeWidth="3" fill="none" />
          <path d="M4 5l8 3" stroke="#50a030" strokeWidth="2" />
        </svg>
        <svg width="16" height="16" viewBox="0 0 16 16">
          <rect x="1" y="1" width="14" height="14" fill="#a8c4dc" stroke="#d0dce8" />
          <circle cx="10" cy="9" r="3" fill="none" stroke="#fff" strokeWidth="2.500" />
          <path d="M10 4v1M10 13v2M5 9h1M14 9h2M3 3l3 4" stroke="#4888b8" />
        </svg>
        <svg width="17" height="16" viewBox="0 0 17 16">
          <path d="M3 1h13v10H3z" fill="#686868" stroke="#d8d8d8" strokeWidth="1.500" />
          <path d="M10 15h5" stroke="#ddd" strokeWidth="2" />
          <circle cx="5" cy="9" r="4.500" fill="#d8dce0" />
        </svg>
        <svg width="16" height="14" viewBox="0 0 16 14" fill="none" stroke="#fff">
          <path d="M1 5h2l4-4v12L3 9H1z" fill="#ddd" />
          <path d="M9 4.500q1.500 2.500 0 5M11 3q3 4 0 8M13 1.500q4 5.500 0 11" />
        </svg>
        <UTorrent size={17} />
        <svg width="16" height="14" viewBox="0 0 16 14">
          <path d="M1 11Q0 4 3 1q3 2 5 6 2-4 5-6 3 3 2 10l-3 2V6L9 11H7L4 6v7z" fill="#1c60b8" />
        </svg>
        <svg width="16" height="14" viewBox="0 0 16 14">
          <path d="M2 11l8-7 3-3 1 2 1 2-5 6-6 3z" fill="#c4ccd4" />
          <circle cx="8" cy="8" r="3.500" fill="#d83828" />
          <path d="M1 8l4 1M10 12l2-3" stroke="#d04030" strokeWidth="2" />
        </svg>
        <svg width="16" height="16" viewBox="0 0 16 16">
          <path d="M1 7h7V4l7-3v14H1z" fill="#10a840" />
          <path d="M5 9l3 3 6-7" stroke="#fff" strokeWidth="2" fill="none" />
        </svg>
        <svg width="16" height="15" viewBox="0 0 16 15">
          <path d="M2 1v13" stroke="#fff" strokeWidth="2" />
          <path d="M3 2h6v1h5l-2 3 0 3H7V8H3z" fill="#fff" />
        </svg>
        <svg width="16" height="15" viewBox="0 0 16 15" fill="none" stroke="#fff" strokeWidth="1.300">
          <path d="M6 4h9v7H5V6M7 14h7M10.500 11v3M3 5v9h3M1 0v3q2 3 4 0V0M3 0v2" />
        </svg>
        <div className="w-[70px] text-center text-[12px] leading-[17px] text-white">
          <time>9:27 AM</time>
          <br />
          <time>8/26/2016</time>
        </div>
      </div>
      <button
        aria-label="Show desktop"
        className="h-[38px] w-[13px] shrink-0 border border-[#7c9cc0] bg-[linear-gradient(180deg,#6084b0,#1c4c84_50%,#3060a0)]"
      />
    </nav>
  )
}

function UTorrent({ size }: { size: number }) {
  return (
    <svg width={size} height={size} viewBox="0 0 32 32" fill="none">
      <circle cx="16" cy="16" r="15" fill="#149048" stroke="#fff" strokeWidth="2" />
      <path d="M6 9l6 12M12 21q6 2 8-2l-5-11M20 18q2 4 7 1M12 20l3 10" stroke="#fff" strokeWidth="4" />
    </svg>
  )
}

export default function App() {
  return (
    <div className="flex h-screen flex-col overflow-hidden font-['Open_Sans','Noto_Sans',sans-serif] text-black">
      <div className="relative flex-1 overflow-hidden bg-[#0454b4] bg-[linear-gradient(90deg,transparent_30%,#0050b4_60%),linear-gradient(180deg,#0448a8_0%,#0860c4_22%,#0c8cdc_45%,#24bcec_65%,#28c8f0_78%,#1898d8_100%)]">
        <svg className="absolute bottom-0 left-0" width="60" height="160" viewBox="0 0 60 160" fill="none">
          <path d="M0 92Q28 84 48 44" stroke="#b8ecfc" strokeWidth="2" opacity="0.700" />
          <path d="M0 152Q20 110 60 68" stroke="#a8d850" strokeWidth="2" />
        </svg>
        <svg className="absolute top-[8px] left-[90px]" width="210" height="16" viewBox="0 0 210 16">
          <ellipse cx="24" cy="14" rx="20" ry="12" fill="#1c9cd8" />
          <path d="M102 3q3-5 6 0l4 13h-14z" fill="#e87c20" />
          <path d="M163 3h22l4 13h-28z" fill="#d8e0e0" />
          <path d="M165 4h18v3h-18z" fill="#28683c" />
        </svg>

        {/* shortcuts down the left edge */}
        <div className="absolute top-[8px] left-0 flex w-[74px] flex-col">
          {DESKTOP_ICONS.map((icon) => (
            <a
              key={icon.label[0]}
              href="#"
              className="flex h-[104px] flex-col items-center text-center text-[12px] leading-[15px] whitespace-nowrap text-white [text-shadow:1px_1px_2px_#000]"
            >
              <span className="relative mb-[2px] flex h-[48px] w-[46px] items-center justify-center">
                {icon.art}
                {icon.shortcut && <Shortcut />}
              </span>
              {icon.label.map((line) => (
                <span key={line}>{line}</span>
              ))}
            </a>
          ))}
        </div>

        <BackWindow />
        <AudacityWindow />
      </div>
      <Taskbar />
    </div>
  )
}
